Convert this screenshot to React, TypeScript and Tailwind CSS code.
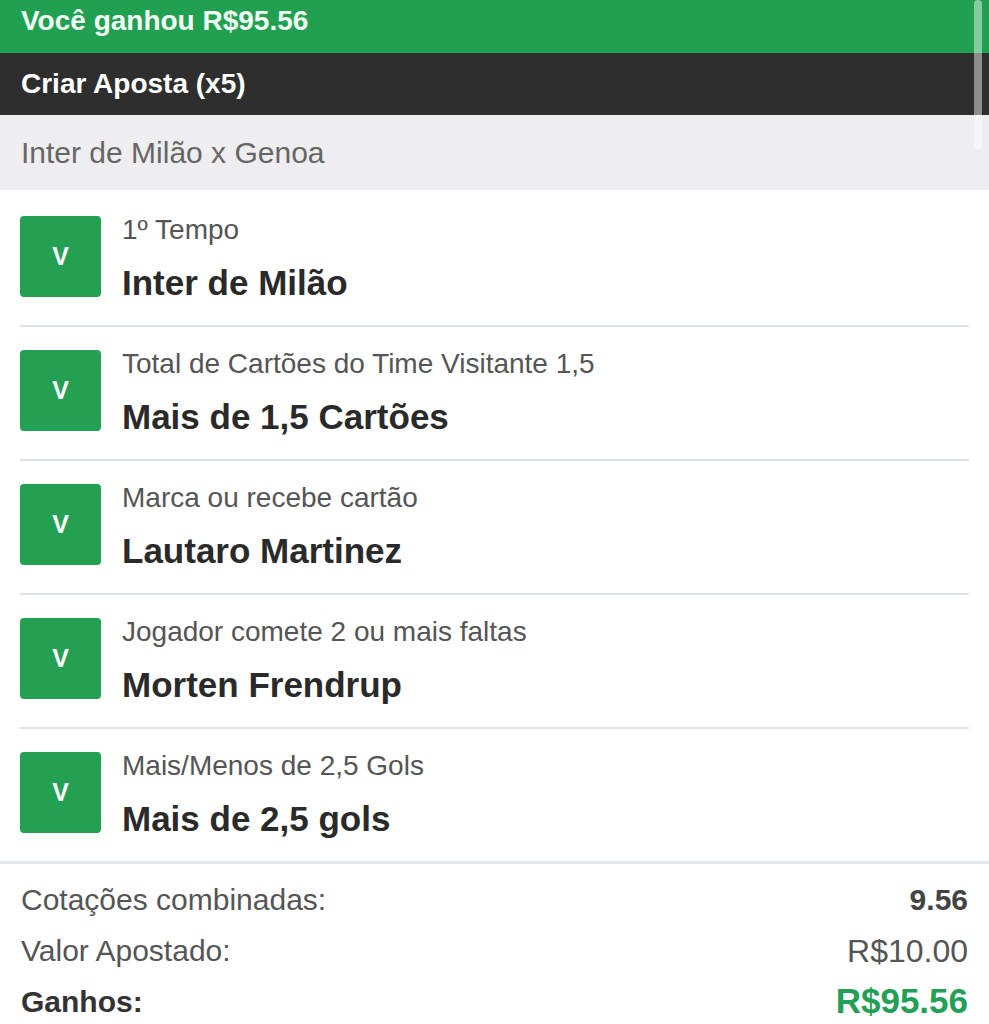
import React from 'react';

type Selection = {
  market: string;
  pick: string;
};

const selections: Selection[] = [
  { market: '1º Tempo', pick: 'Inter de Milão' },
  { market: 'Total de Cartões do Time Visitante 1,5', pick: 'Mais de 1,5 Cartões' },
  { market: 'Marca ou recebe cartão', pick: 'Lautaro Martinez' },
  { market: 'Jogador comete 2 ou mais faltas', pick: 'Morten Frendrup' },
  { market: 'Mais/Menos de 2,5 Gols', pick: 'Mais de 2,5 gols' },
];

function SelectionRow({ item, last }: { item: Selection; last: boolean }) {
  return (
    <div className="px-[20px]">
      <div
        className={
          last
            ? 'flex gap-[21px] pt-[23px] pb-[28px]'
            : 'flex gap-[21px] pt-[23px] pb-[28px] border-b-2 border-[#dfe5e8]'
        }
      >
        <div className="w-[81px] h-[81px] shrink-0 rounded-[4px] bg-[#23a052] grid place-items-center">
          <span className="text-white font-bold text-[25px] leading-none">V</span>
        </div>
        <div className="flex flex-col h-[81px]">
          <div className="text-[28px] leading-[28px] text-[#555555]">{item.market}</div>
          <div className="mt-[19px] text-[35px] leading-[40px] font-bold text-[#2a2a2a]">{item.pick}</div>
        </div>
      </div>
    </div>
  );
}

export default function App() {
  return (
    <div className="relative w-[989px] h-[1024px] overflow-hidden bg-white font-['Liberation_Sans',Arial,sans-serif]">
      {/* top banners */}
      <div className="h-[53px] bg-[#21a052] px-[21px] pt-[5px]">
        <div className="text-[28px] leading-[32px] font-bold text-[#f2fff6]">Você ganhou R$95.56</div>
      </div>
      <div className="h-[62px] bg-[#2e2e2e] px-[21px] flex items-center">
        <div className="text-[28px] font-bold text-white">Criar Aposta (x5)</div>
      </div>
      <div className="h-[75px] bg-[#eeeef0] px-[21px] flex items-center">
        <div className="text-[30px] text-[#666666]">Inter de Milão x Genoa</div>
      </div>

      {/* selections */}
      <div className="pt-[3px] border-b-[3px] border-[#e4e8eb]">
        {selections.map((s, i) => (
          <SelectionRow key={s.pick} item={s} last={i === selections.length - 1} />
        ))}
      </div>

      {/* totals */}
      <div className="px-[21px] pt-[10px]">
        <div className="flex items-center justify-between h-[51px]">
          <span className="text-[30px] text-[#555555]">Cotações combinadas:</span>
          <span className="text-[30px] font-bold text-[#444444]">9.56</span>
        </div>
        <div className="flex items-center justify-between h-[51px]">
          <span className="text-[30px] text-[#555555]">Valor Apostado:</span>
          <span className="text-[32px] text-[#555555]">R$10.00</span>
        </div>
        <div className="flex items-center justify-between h-[51px]">
          <span className="text-[30px] font-bold text-[#333333]">Ganhos:</span>
          <span className="text-[35px] font-bold text-[#22a055]">R$95.56</span>
        </div>
      </div>

      {/* scroll indicator */}
      <div className="absolute top-0 right-[7px] w-[8px] h-[150px] rounded-full bg-white/45" />
    </div>
  );
}
